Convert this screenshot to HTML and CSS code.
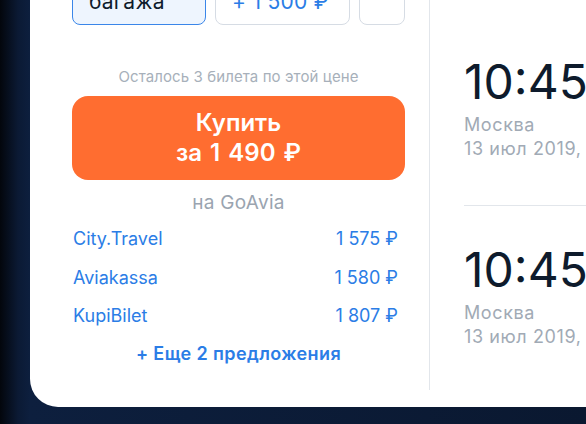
FILE: index.html
```html
<!DOCTYPE html>
<html lang="ru">
	<head>
		<meta charset="UTF-8" />
		<meta name="viewport" content="width=device-width, initial-scale=1.0" />
		<title>Билет</title>
		<link rel="stylesheet" href="styles.css">
	</head>
	<body>
		<div class="card">
			<div class="offer">
				<div class="options">
					<button class="option selected"><span>Без</span><span>багажа</span></button>
					<button class="option"><span class="dark">С багажом</span><span>+ 1 500 ₽</span></button>
					<button class="option"></button>
				</div>

				<div class="left-note">Осталось 3 билета по этой цене</div>

				<button class="buy">
					<span>Купить</span>
					<span>за 1 490 ₽</span>
				</button>

				<div class="seller">на GoAvia</div>

				<ul class="agencies">
					<li><span>City.Travel</span><span>1 575 ₽</span></li>
					<li><span>Aviakassa</span><span>1 580 ₽</span></li>
					<li><span>KupiBilet</span><span>1 807 ₽</span></li>
				</ul>

				<div class="more">+ Еще 2 предложения</div>
			</div>

			<div class="flights">
				<div class="flight">
					<div class="time">10:45</div>
					<div class="city">Москва</div>
					<div class="date">13 июл 2019,</div>
				</div>
				<div class="flight">
					<div class="time">10:45</div>
					<div class="city">Москва</div>
					<div class="date">13 июл 2019,</div>
				</div>
			</div>
		</div>
	</body>
</html>
```

FILE: styles.css
```css
:root {
	--bg: #0b1a32;
	--card: #ffffff;
	--orange: #ff6d30;
	--blue: #2b7de6;
	--text: #0e1b2c;
	--gray: #a1aab5;
	--line: #e2e6eb;
}

* {
	box-sizing: border-box;
}

body {
	margin: 0;
	height: 424px;
	overflow: hidden;
	font-family: 'Inter', 'Noto Sans', sans-serif;
	color: var(--text);
	background: linear-gradient(90deg, #03060c 0, #0b1a34 18px, #0d1f3e 30px, #0a1830 100%);
}

.card {
	display: flex;
	margin-left: 30px;
	height: 407px;
	background: var(--card);
	border-bottom-left-radius: 28px;
	overflow: hidden;
}

/* left column */

.offer {
	width: 400px;
	height: 390px;
	padding: 0 24px 0 42px;
	border-right: 1px solid var(--line);
	flex-shrink: 0;
}

.options {
	display: flex;
	gap: 9px;
	margin-top: -30px;
}

.option {
	display: flex;
	flex-direction: column;
	justify-content: flex-end;
	align-items: flex-start;
	height: 55px;
	padding: 0 16px 10px;
	font-family: inherit;
	font-size: 21px;
	line-height: 24px;
	letter-spacing: 0.3px;
	color: var(--blue);
	background: #fff;
	border: 1.5px solid #d6dce4;
	border-radius: 8px;
}

.option:nth-child(1) {
	width: 134px;
}

.option:nth-child(2) {
	width: 135px;
}

.option:nth-child(3) {
	width: 46px;
}

.option.selected {
	color: var(--text);
	background: #eef5fe;
	border-color: #3a86e9;
}

.option .dark {
	color: var(--text);
}

.left-note {
	margin-top: 42px;
	font-size: 15px;
	line-height: 20px;
	letter-spacing: 0.1px;
	text-align: center;
	color: #a7b0ba;
}

.buy {
	display: flex;
	flex-direction: column;
	align-items: center;
	width: 100%;
	height: 84px;
	margin-top: 9px;
	padding: 12px 0;
	font-family: inherit;
	font-size: 24px;
	font-weight: 600;
	line-height: 30px;
	word-spacing: 2px;
	color: #fff;
	background: var(--orange);
	border: none;
	border-radius: 16px;
}

.seller {
	margin-top: 11px;
	font-size: 19px;
	line-height: 24px;
	letter-spacing: 0.3px;
	text-align: center;
	color: #9aa4b0;
}

.agencies {
	list-style: none;
	margin: 5px 0 0;
	padding: 0 7px 0 1px;
}

.agencies li {
	display: flex;
	justify-content: space-between;
	height: 38.5px;
	line-height: 38.5px;
	font-size: 18px;
	color: var(--blue);
}

.more {
	margin-top: 6px;
	font-size: 18px;
	font-weight: 600;
	line-height: 24px;
	letter-spacing: 0.4px;
	text-align: center;
	color: var(--blue);
}

/* right column */

.flights {
	flex: 1;
	padding: 18px 0 0 34px;
}

.flight {
	padding: 36px 0 44px;
	border-bottom: 1px solid var(--line);
}

.flight:last-child {
	border-bottom: none;
}

.time {
	font-size: 48px;
	line-height: 56px;
	white-space: nowrap;
}

.city,
.date {
	font-size: 18px;
	line-height: 24px;
	letter-spacing: 0.6px;
	color: var(--gray);
	white-space: nowrap;
}

.city {
	margin-top: 3px;
}
```
